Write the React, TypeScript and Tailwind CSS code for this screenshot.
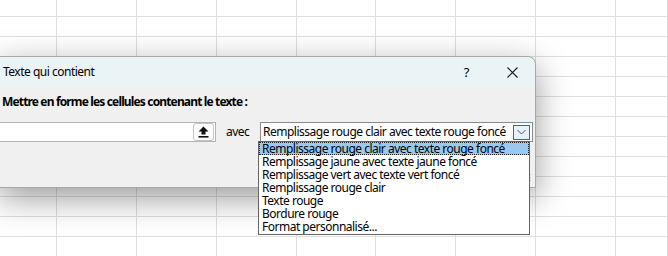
const cols = [57, 80, 80, 80, 79, 80, 80, 80, 52];
const rows = [17, 20, 20, 20, 20, 20, 20, 20, 20, 20, 20, 20, 20];

const options = [
  "Remplissage rouge clair avec texte rouge foncé",
  "Remplissage jaune avec texte jaune foncé",
  "Remplissage vert avec texte vert foncé",
  "Remplissage rouge clair",
  "Texte rouge",
  "Bordure rouge",
  "Format personnalisé...",
];

const App = () => {
  return (
    <div className="relative w-[668px] h-[256px] overflow-hidden bg-white text-black font-['Noto_Sans','Open_Sans',sans-serif] text-[12px] tracking-[-0.5px]">
      {/* Sheet grid in the background */}
      <div className="flex flex-col">
        {rows.map((h, r) => (
          <div key={r} className="flex" style={{ height: h }}>
            {cols.map((w, c) => (
              <div key={c} className="border-r border-b border-[#dedede] shrink-0" style={{ width: w }} />
            ))}
          </div>
        ))}
      </div>

      {/* Dialog window */}
      <div className="absolute left-[-2px] top-[56px] w-[538px] h-[132px] flex flex-col border border-[#a8a8a8] rounded-tr-[8px] bg-[#f0f0f0] shadow-[0_10px_34px_rgba(0,0,0,0.4)]">
        <div className="h-[30px] flex items-center pl-[4px] pr-[16px] bg-[#eaf3f6] rounded-tr-[8px]">
          <span className="leading-[16px] whitespace-nowrap">Texte qui contient</span>
          <span className="ml-auto mr-[38px] text-[13px] leading-[16px]">?</span>
          <svg width="11" height="11" viewBox="0 0 11 11" className="mr-[1px]">
            <path d="M0.5 0.5 L10.5 10.5 M10.5 0.5 L0.5 10.5" stroke="#1a1a1a" strokeWidth="1.1" />
          </svg>
        </div>
        <div className="pl-[3px] pt-[7px] font-bold leading-[16px] tracking-[-0.85px] whitespace-nowrap">
          Mettre en forme les cellules contenant le texte :
        </div>
        <div className="flex items-center mt-[12px] h-[20px]">
          <div className="w-[217px] h-[20px] flex justify-end items-center bg-white border border-[#b4b4b4] border-l-0 pr-[1px]">
            <div className="w-[21px] h-[18px] flex items-center justify-center bg-[#fbfbfb] border border-[#c4c4c4] rounded-[3px]">
              <svg width="11" height="12" viewBox="0 0 11 12">
                <path d="M5.5 0.5 L10.5 5.5 H7.5 V8.5 H3.5 V5.5 H0.5 Z" fill="#111" />
                <rect x="0.5" y="10" width="10" height="1.6" fill="#111" />
              </svg>
            </div>
          </div>
          <span className="ml-[10px] w-[34px] leading-[16px]">avec</span>
          <div className="w-[273px] h-[20px] flex items-center bg-white border border-[#8a8a8a] pl-[2px] pr-[2px]">
            <span className="leading-[16px] whitespace-nowrap">Remplissage rouge clair avec texte rouge foncé</span>
            <div className="ml-auto w-[17px] h-[15px] flex items-center justify-center bg-[#e5f1fb] border border-[#0078d4] shrink-0">
              <svg width="9" height="6" viewBox="0 0 9 6">
                <path d="M0.5 1 L4.5 5 L8.5 1" stroke="#555" strokeWidth="1" fill="none" />
              </svg>
            </div>
          </div>
        </div>
        <svg width="6" height="8" viewBox="0 0 6 8" className="absolute right-[3px] bottom-[5px]">
          <g fill="#c2c2c2">
            <rect x="4" y="0" width="1" height="1" />
            <rect x="1" y="3" width="1" height="1" />
            <rect x="4" y="3" width="1" height="1" />
            <rect x="1" y="6" width="1" height="1" />
            <rect x="4" y="6" width="1" height="1" />
          </g>
        </svg>
      </div>

      {/* Open dropdown list */}
      <div className="absolute left-[258px] top-[141px] w-[272px] h-[94px] flex flex-col bg-white border border-[#646464]">
        {options.map((o, i) => (
          <div
            key={o}
            className={
              i === 0
                ? "h-[13px] flex items-center pl-[2px] bg-[#99c9ef] border border-dotted border-[#222] leading-[13px] whitespace-nowrap"
                : "h-[13px] flex items-center pl-[3px] leading-[13px] whitespace-nowrap"
            }
          >
            {o}
          </div>
        ))}
      </div>
    </div>
  );
};

export default App;
